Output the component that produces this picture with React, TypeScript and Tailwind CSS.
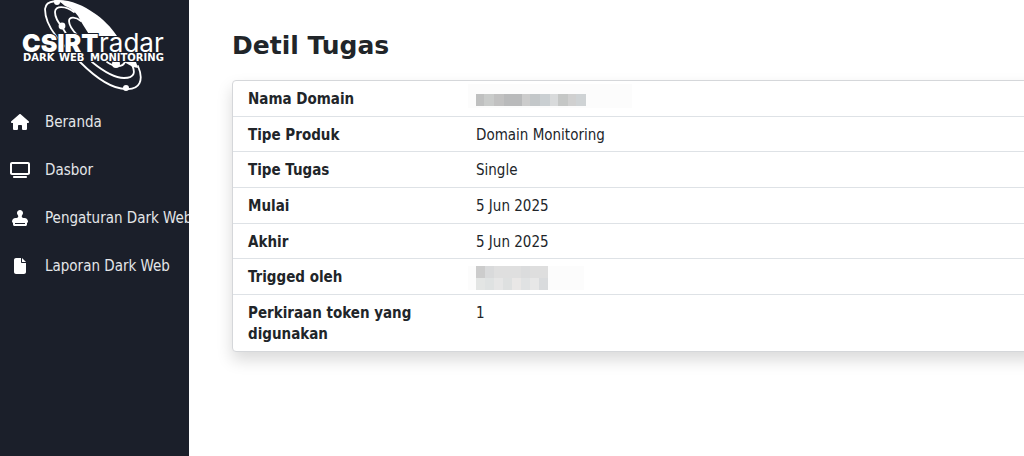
import type { IconType } from "react-icons"
import { FaFile, FaHouse, FaStamp, FaTv } from "react-icons/fa6"
import type { ReactNode } from "react"

interface MenuItem {
    label: string
    icon: IconType
    iconClass: string
}

interface DetailRow {
    label: string
    value: ReactNode
}

const menu: MenuItem[] = [
    { label: "Beranda", icon: FaHouse, iconClass: "h-4 w-[18px]" },
    { label: "Dasbor", icon: FaTv, iconClass: "h-4 w-5" },
    { label: "Pengaturan Dark Web", icon: FaStamp, iconClass: "size-4" },
    { label: "Laporan Dark Web", icon: FaFile, iconClass: "h-4 w-3" },
]

function Logo() {
    return (
        <svg viewBox="0 0 189 96" className="block h-24 w-full" role="img" aria-label="CSIRTradar Dark Web Monitoring">
            {/* orbits */}
            <g fill="none" stroke="#fff" strokeWidth="1.8" strokeLinecap="round">
                <path d="M72 4C60 0 46-1 45 9c0 9 4 18 11 27l12 14M80 62c14 14 31 27 46 27 14 1 18-9 12-23" />
                <path d="M74 12C66 6 55 5 55 12c0 6 3 10 7 15l8 13M92 62c11 9 22 16 32 16 11 0 12-6 7-15" />
                <path d="M81 21c-6-5-12-4-12 0 0 5 4 10 9 15M107 62c7 5 15 6 18 0" />
            </g>
            <path d="M58 0c14 0 26 6 36 13 9 6 17 14 23 23H90c-5-8-9-14-12-20-3-4-7-8-13-10z" fill="#fff" />
            <path d="M124 62h12l2 6-5-1z" fill="#fff" />
            <g fill="#fff">
                <circle cx="57" cy="2" r="3" />
                <circle cx="62" cy="26" r="3.4" />
                <circle cx="116" cy="64" r="4" />
                <circle cx="126" cy="88" r="3" />
            </g>
            <g fill="#fff" stroke="#1b1f2a" strokeWidth="2" paintOrder="stroke">
                <text x="22" y="52" fontSize="25" fontWeight="900" className="font-['Inter',sans-serif]">CSIRT</text>
                <text x="99" y="52" fontSize="26" fontWeight="400" className="font-['Inter',sans-serif]">radar</text>
            </g>
            <g fill="#fff" fontSize="10" fontWeight="700" stroke="#1b1f2a" strokeWidth="2" paintOrder="stroke" className="font-['DejaVu_Sans',sans-serif]">
                <text x="23" y="61">DARK</text>
                <text x="59" y="61">WEB</text>
                <text x="90" y="61">MONITORING</text>
            </g>
        </svg>
    )
}

// censored domain name
function MaskedDomain() {
    return (
        <div className="-mt-[5px] -mb-1 -ml-2 flex h-6 w-41 items-end bg-[#fcfcfc] pl-2">
            <div className="mb-0.5 flex h-3">
                <span className="w-2 bg-[#bfc0c0]" />
                <span className="w-2.5 bg-[#c9cbca]" />
                <span className="w-2.5 bg-[#c1c1c1]" />
                <span className="w-4.5 bg-[#b9babb]" />
                <span className="w-2 bg-[#cccccc]" />
                <span className="w-2.5 bg-[#c3c7c9]" />
                <span className="w-2.5 bg-[#cacfd2]" />
                <span className="w-2 bg-[#d8dadb]" />
                <span className="w-2.5 bg-[#c5c7c6]" />
                <span className="w-2 bg-[#d0d0d0]" />
                <span className="w-2.5 bg-[#cfd3d5]" />
            </div>
        </div>
    )
}

// censored user name
function MaskedUser() {
    return (
        <div className="-mt-px -mb-1 -ml-2 flex h-6 w-29 bg-[#fcfcfc] pl-2">
            <div className="grid w-18 grid-cols-8 grid-rows-2">
                <span className="bg-[#cccccc]" />
                <span className="bg-[#d9dadb]" />
                <span className="col-span-3 bg-[#dfdfdf]" />
                <span className="bg-[#dbdcdd]" />
                <span className="col-span-2 bg-[#dedede]" />
                <span className="bg-[#e3e5e4]" />
                <span className="bg-[#dfe2e2]" />
                <span className="bg-[#e6e6e6]" />
                <span className="bg-[#dee0e0]" />
                <span className="bg-[#e9e7e6]" />
                <span className="bg-[#e0e2e3]" />
                <span className="bg-[#e7e7e7]" />
                <span className="bg-[#d9dbdd]" />
            </div>
        </div>
    )
}

const rows: DetailRow[] = [
    { label: "Nama Domain", value: <MaskedDomain /> },
    { label: "Tipe Produk", value: "Domain Monitoring" },
    { label: "Tipe Tugas", value: "Single" },
    { label: "Mulai", value: "5 Jun 2025" },
    { label: "Akhir", value: "5 Jun 2025" },
    { label: "Trigged oleh", value: <MaskedUser /> },
    { label: "Perkiraan token yang digunakan", value: "1" },
]

export default function App() {
    return (
        <div className="flex min-h-screen overflow-hidden bg-white font-['DejaVu_Sans_Condensed','DejaVu_Sans',sans-serif] text-[15px] text-[#212529]">
            <aside className="w-[189px] shrink-0 overflow-hidden bg-[#1b1f2a]">
                <Logo />
                <nav className="mt-0.5">
                    {menu.map(({ label, icon: Icon, iconClass }) => (
                        <a key={label} href="#" className="flex h-12 items-center gap-[15px] px-2.5 whitespace-nowrap text-[#e4e6e9]">
                            <span className="flex w-5 shrink-0 justify-center text-white">
                                <Icon className={iconClass} />
                            </span>
                            {label}
                        </a>
                    ))}
                </nav>
            </aside>

            <main className="min-w-0 flex-1 pt-7 pl-[43px]">
                <h1 className="font-['DejaVu_Sans',sans-serif] text-[25px] leading-9 font-bold">Detil Tugas</h1>
                <div className="mt-4 -mr-4 rounded border border-[#d5d7da] bg-white shadow-[0_8px_16px_rgba(0,0,0,0.15)]">
                    <table className="h-[270px] w-full table-fixed text-left leading-[21px]">
                        <tbody>
                            {rows.map((row) => (
                                <tr key={row.label} className="border-b border-[#dee2e6] last:border-b-0">
                                    <th scope="row" className="w-[228px] pt-2 pr-4 pb-[5px] pl-[15px] align-top font-bold">{row.label}</th>
                                    <td className="pt-2 pb-[5px] pl-[15px] align-top">{row.value}</td>
                                </tr>
                            ))}
                        </tbody>
                    </table>
                </div>
            </main>
        </div>
    )
}
